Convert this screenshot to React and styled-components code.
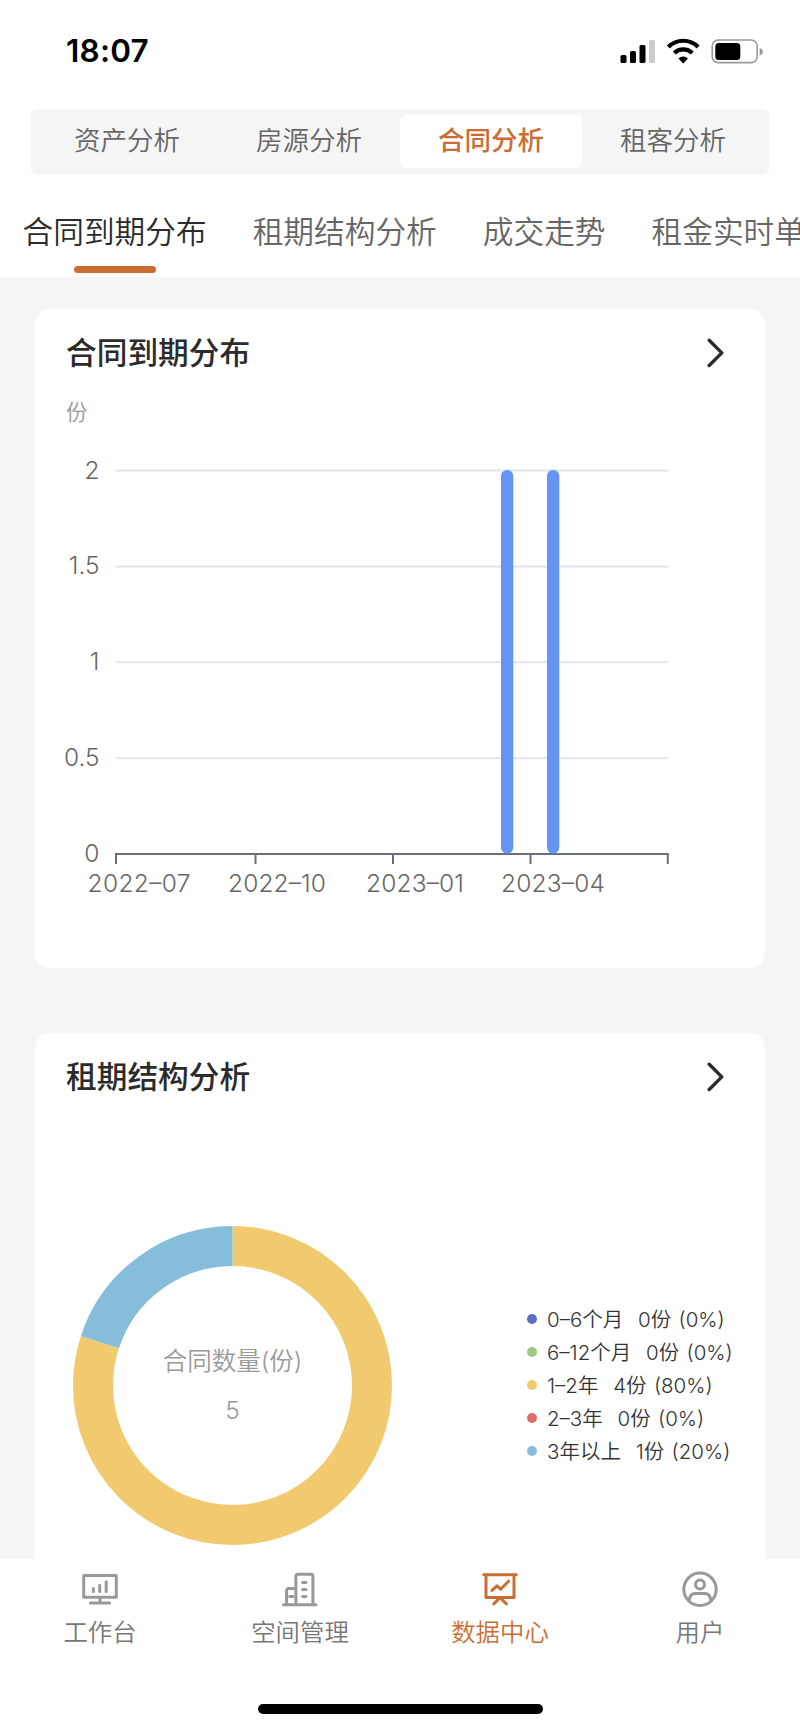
import React from 'react';
import styled, { createGlobalStyle, css } from 'styled-components';

/* ==================================================
 *  Theme
================================================== */
const colors = {
  accent: '#cb6d32',
  text: '#2b2b2b',
  textSoft: '#666',
  textMuted: '#999',
  page: '#f5f5f5',
  bar: '#6595f4',
  grid: '#e0e6ec',
  axis: '#6b6e76',
};

const fontStack = "Inter, 'Noto Sans CJK SC', sans-serif";

/* ==================================================
 *  Data
================================================== */
const segments = ['资产分析', '房源分析', '合同分析', '租客分析'];
const tabs = ['合同到期分布', '租期结构分析', '成交走势', '租金实时单'];

const yTicks = ['2', '1.5', '1', '0.5', '0'];
const xLabels = ['2022–07', '2022–10', '2023–01', '2023–04'];
const labelWidths = [103, 98, 98, 104];
const bars = [
  { month: 8, value: 2 },
  { month: 9, value: 2 },
];

const terms = [
  { name: '0–6个月', count: 0, percent: 0, color: '#5a6fc0' },
  { name: '6–12个月', count: 0, percent: 0, color: '#9eca7f' },
  { name: '1–2年', count: 4, percent: 80, color: '#f1ca6f' },
  { name: '2–3年', count: 0, percent: 0, color: '#de6b6a' },
  { name: '3年以上', count: 1, percent: 20, color: '#86bddb' },
];

/* ==================================================
 *  Styles
================================================== */
const GlobalStyle = createGlobalStyle`
  * {
    box-sizing: border-box;
  }
  body {
    margin: 0;
    background: ${colors.page};
    font-family: ${fontStack};
  }
`;

const Screen = styled.div`
  display: flex;
  flex-direction: column;
  width: 800px;
  height: 1731px;
  overflow: hidden;
  background: ${colors.page};
`;

const Header = styled.header`
  flex: none;
  height: 277px;
  background: white;
  overflow: hidden;
`;

const StatusBar = styled.div`
  display: flex;
  align-items: center;
  justify-content: space-between;
  height: 109px;
  padding: 0 36px 7px 66px;
`;

const Clock = styled.span`
  font-size: 31.5px;
  font-weight: 600;
  line-height: 40px;
  letter-spacing: 0.2px;
  color: black;
`;

const StatusIcons = styled.svg`
  display: block;
  width: 144px;
  height: 26px;
`;

const Segmented = styled.nav`
  display: flex;
  height: 65px;
  margin: 0 31px;
  padding: 6px 5px;
  border-radius: 6px;
  background: ${colors.page};
`;

const Segment = styled.a`
  flex: 1;
  padding-bottom: 3px;
  border-radius: 6px;
  font-size: 26.5px;
  line-height: 50px;
  font-weight: 350;
  text-align: center;
  color: ${colors.textSoft};
  ${({ $active }) =>
    $active &&
    css`
      background: white;
      color: ${colors.accent};
      font-weight: 500;
    `}
`;

const Tabs = styled.nav`
  display: flex;
  gap: 46px;
  height: 103px;
  padding: 37px 0 0 22.5px;
`;

const Tab = styled.a`
  flex: none;
  display: flex;
  flex-direction: column;
  align-items: center;
  font-size: 30.7px;
  line-height: 42px;
  font-weight: 350;
  white-space: nowrap;
  color: ${({ $active }) => ($active ? colors.text : colors.textSoft)};
  &::after {
    content: '';
    width: 82px;
    height: 7px;
    margin-top: 13px;
    border-radius: 4px;
    background: ${({ $active }) => ($active ? colors.accent : 'transparent')};
  }
`;

const Content = styled.main`
  flex: 1;
  min-height: 0;
  display: flex;
  flex-direction: column;
  gap: 65px;
  padding: 32px 35px 0;
  overflow: hidden;
`;

const Card = styled.section`
  flex: none;
  height: ${({ $height }) => $height}px;
  border-radius: 15px;
  background: white;
`;

const CardHeader = styled.div`
  display: flex;
  align-items: center;
  justify-content: space-between;
  height: 87px;
  padding: 0 41px 0 31px;
`;

const CardTitle = styled.h2`
  margin: 0;
  font-size: 30.7px;
  line-height: 44px;
  font-weight: 500;
  color: ${colors.text};
`;

const Unit = styled.div`
  padding-left: 31px;
  font-size: 21.5px;
  font-weight: 350;
  line-height: 32px;
  color: ${colors.textMuted};
`;

const Chart = styled.svg`
  display: block;
  font-family: ${fontStack};
  font-weight: 350;
`;

const DonutRow = styled.div`
  display: flex;
  align-items: center;
  padding: 106px 0 0 38px;
`;

const Legend = styled.ul`
  list-style: none;
  margin: 0 0 3px 134.5px;
  padding: 0;
`;

const LegendItem = styled.li`
  display: flex;
  align-items: center;
  height: 32.8px;
  font-size: 20.5px;
  font-weight: 350;
  word-spacing: 1.6px;
  white-space: pre;
  color: #333;
  &::before {
    content: '';
    width: 10px;
    height: 10px;
    margin: 2px 10.5px 0 0;
    border-radius: 50%;
    background: ${({ $color }) => $color};
  }
`;

const TabBar = styled.footer`
  flex: none;
  display: flex;
  flex-direction: column;
  justify-content: space-between;
  align-items: center;
  height: 172px;
  padding-bottom: 17px;
  background: white;
`;

const TabBarItems = styled.nav`
  display: flex;
  width: 100%;
  padding-top: 11px;
`;

const TabBarItem = styled.a`
  flex: 1;
  display: flex;
  flex-direction: column;
  align-items: center;
  font-size: 24.4px;
  font-weight: 350;
  line-height: 36px;
  color: ${({ $active }) => ($active ? colors.accent : '#777')};
  svg {
    width: 38px;
    height: 38px;
    margin-bottom: 6px;
    fill: none;
    stroke: ${({ $active }) => ($active ? colors.accent : '#999')};
    stroke-width: 3;
    stroke-linecap: round;
    stroke-linejoin: round;
  }
`;

const HomeIndicator = styled.div`
  width: 285px;
  height: 10px;
  border-radius: 5px;
  background: black;
`;

/* ==================================================
 *  Icons
================================================== */
const StatusGlyphs = () => (
  <StatusIcons viewBox="0 0 144 26">
    <rect x="0.5" y="17" width="6" height="8" rx="1.6" />
    <rect x="10" y="13" width="6" height="12" rx="1.6" />
    <rect x="19.5" y="7" width="6" height="18" rx="1.6" />
    <rect x="29" y="2" width="6" height="23" rx="1.6" fill="#ccc" />
    <g fill="none" stroke="#000" strokeWidth="4.2">
      <path d="M48.4 8.9a21 21 0 0 1 29.7 0" />
      <path d="M54.2 15.1a13 13 0 0 1 18.1 0" />
    </g>
    <path d="M58.5 20.4a7 7 0 0 1 9.500 0L63.200 25.400z" />
    <rect x="92.2" y="2" width="45" height="22.6" rx="6" fill="none" stroke="#999" strokeWidth="1.6" />
    <rect x="95.300" y="5" width="25" height="17" rx="3.500" />
    <path d="M139.600 10v7.500q3.400-1.400 3.400-3.750t-3.400-3.750z" fill="#999" />
  </StatusIcons>
);

const Chevron = () => (
  <svg width="18" height="32" viewBox="0 0 18 32" fill="none" stroke={colors.text} strokeWidth="3.4">
    <path d="M3.2 3.3l12.600 12.600L3.200 28.500" strokeLinecap="round" strokeLinejoin="round" />
  </svg>
);

const MonitorIcon = () => (
  <svg viewBox="0 0 38 38">
    <path d="M2.7 5.6h32.6v21.6H2.7zM19 27.2v5.9M9.4 33.1h19.2M12.4 18.4v3.2M18.7 15.2v6.4M25.2 11.8v9.8" />
  </svg>
);

const BuildingIcon = () => (
  <svg viewBox="0 0 38 38">
    <path d="M2.5 34.7h32.4M14.9 34.7V6.2a2 2 0 0 1 2-2h13a2 2 0 0 1 2 2v28.5M5.6 34.7V20.5a2 2 0 0 1 2-2h7.3M21.6 12.4h3.4M21.6 19.6h3.4M21.6 26.6h3.4M8.8 26.6h3" />
  </svg>
);

const BoardIcon = () => (
  <svg viewBox="0 0 38 38">
    <path d="M2.7 4.7h32.6M5 4.7v22.8h28V4.7M11 20.4l5-4.6 3.6 3.4 8-8M18.6 28.2l-5.8 5.6M19.4 28.2l6 5.6" />
  </svg>
);

const UserIcon = () => (
  <svg viewBox="0 0 38 38">
    <circle cx="19" cy="19.3" r="16.2" />
    <circle cx="19" cy="14.4" r="4.5" />
    <path d="M8 30.6c.7-4.4 2.5-7.2 6-7.2h10c3.5 0 5.3 2.8 6 7.2" />
  </svg>
);

const tabBarItems = [
  { label: '工作台', icon: MonitorIcon },
  { label: '空间管理', icon: BuildingIcon },
  { label: '数据中心', icon: BoardIcon, active: true },
  { label: '用户', icon: UserIcon },
];

/* ==================================================
 *  Charts
================================================== */
const plot = { left: 81, right: 633, top: 42.5, bottom: 426 };

function BarChart() {
  const step = (plot.bottom - plot.top) / (yTicks.length - 1);
  const month = (plot.right - plot.left) / 12;
  return (
    <Chart width="730" height="500" viewBox="0 0 730 500">
      {yTicks.map((tick, i) => (
        <g key={tick}>
          {i < yTicks.length - 1 && (
            <path d={`M${plot.left} ${plot.top + i * step}H${plot.right}`} stroke={colors.grid} strokeWidth="2" />
          )}
          <text x="64.5" y={plot.top + i * step + 8} textAnchor="end" fontSize="24.5" fill={colors.textSoft}>
            {tick}
          </text>
        </g>
      ))}
      <path
        d={`M${plot.left} ${plot.bottom}H${plot.right}M81 425v11M220.5 425v11M358 425v11M495.5 425v11M632.8 425v11`}
        stroke={colors.axis}
        strokeWidth="2"
      />
      {xLabels.map((label, i) => (
        <text
          key={label}
          x={plot.left + (i * 3 + 0.5) * month}
          y="464"
          textAnchor="middle"
          textLength={labelWidths[i]}
          fontSize="24.5"
          fill={colors.textSoft}
        >
          {label}
        </text>
      ))}
      {bars.map(({ month: m, value }) => {
        const height = (value / 2) * (plot.bottom - plot.top);
        return (
          <rect
            key={m}
            x={plot.left + (m + 0.5) * month - 6}
            y={plot.bottom - height - 0.5}
            width="12.3"
            height={height}
            rx="6"
            fill={colors.bar}
          />
        );
      })}
    </Chart>
  );
}

function Donut() {
  const radius = 139.5;
  const length = 2 * Math.PI * radius;
  let start = 0;
  return (
    <Chart width="319" height="319" viewBox="0 0 319 319">
      <g transform="rotate(-90 159.5 159.5)" fill="none" strokeWidth="40">
        {terms.filter(t => t.percent > 0).map(({ name, percent, color }) => {
          const arc = (percent / 100) * length;
          const offset = -start;
          start += arc;
          return (
            <circle
              key={name}
              cx="159.5"
              cy="159.5"
              r={radius}
              stroke={color}
              strokeDasharray={`${arc} ${length - arc}`}
              strokeDashoffset={offset}
            />
          );
        })}
      </g>
      <g textAnchor="middle" fontSize="24.5" fill={colors.textMuted}>
        <text x="159.5" y="144">合同数量(份)</text>
        <text x="159.5" y="193">5</text>
      </g>
    </Chart>
  );
}

/* ==================================================
 *  Render
================================================== */
function App() {
  return (
    <Screen>
      <GlobalStyle />
      <Header>
        <StatusBar>
          <Clock>18:07</Clock>
          <StatusGlyphs />
        </StatusBar>
        <Segmented>
          {segments.map(name => (
            <Segment key={name} $active={name === '合同分析'}>{name}</Segment>
          ))}
        </Segmented>
        <Tabs>
          {tabs.map((name, i) => (
            <Tab key={name} $active={i === 0}>{name}</Tab>
          ))}
        </Tabs>
      </Header>

      <Content>
        <Card $height={659}>
          <CardHeader>
            <CardTitle>合同到期分布</CardTitle>
            <Chevron />
          </CardHeader>
          <Unit>份</Unit>
          <BarChart />
        </Card>
        <Card $height={600}>
          <CardHeader>
            <CardTitle>租期结构分析</CardTitle>
            <Chevron />
          </CardHeader>
          <DonutRow>
            <Donut />
            <Legend>
              {terms.map(({ name, count, percent, color }) => (
                <LegendItem key={name} $color={color}>
                  {`${name}  ${count}份 (${percent}%)`}
                </LegendItem>
              ))}
            </Legend>
          </DonutRow>
        </Card>
      </Content>

      <TabBar>
        <TabBarItems>
          {tabBarItems.map(({ label, icon: Icon, active }) => (
            <TabBarItem key={label} $active={active}>
              <Icon />
              {label}
            </TabBarItem>
          ))}
        </TabBarItems>
        <HomeIndicator />
      </TabBar>
    </Screen>
  );
}

export default App;
